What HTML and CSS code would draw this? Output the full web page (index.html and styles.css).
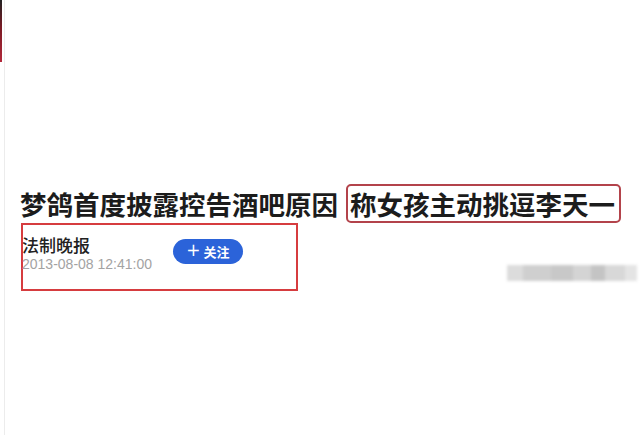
FILE: index.html
```html
<!DOCTYPE html>
<html lang="zh-CN">
<head>
    <meta charset="UTF-8">
    <meta name="viewport" content="width=device-width, initial-scale=1.0">
    <title>梦鸽首度披露控告酒吧原因</title>
    <link rel="stylesheet" href="styles.css">
</head>
<body>
    <div class="screen">
        <div class="edge">
            <div class="edge-mark"></div>
        </div>
        <div class="article">
            <h1 class="title">梦鸽首度披露控告酒吧原因<span class="mark">称女孩主动挑逗李天一</span></h1>
            <div class="meta-row">
                <div class="meta">
                    <div class="source">
                        <p class="name">法制晚报</p>
                        <p class="date">2013-08-08 12:41:00</p>
                    </div>
                    <div class="follow"><span class="plus">+</span>关注</div>
                </div>
                <div class="blur">
                    <span class="b1"></span>
                    <span class="b2"></span>
                    <span class="b3"></span>
                    <span class="b4"></span>
                    <span class="b5"></span>
                    <span class="b6"></span>
                    <span class="b7"></span>
                </div>
            </div>
        </div>
    </div>
</body>
</html>
```

FILE: styles.css
```css
*{
    margin: 0px;
    padding: 0px;
    box-sizing: border-box;
}
body{
    background-color: #fff;
    font-family: "Noto Sans CJK SC", "Noto Sans", sans-serif;
}
.screen{
    width: 640px;
    height: 435px;
    display: flex;
    overflow: hidden;
}
.edge{
    width: 5px;
    border-right: 1px solid #ececec;
}
.edge-mark{
    width: 2px;
    height: 62px;
    background: linear-gradient(#222, #7a1a24 45%, #b3283a);
}
.article{
    flex: 1;
    padding: 184px 3px 0 15px;
}
.title{
    font-size: 26.5px;
    font-weight: 700;
    line-height: 39px;
    color: #1c1c1c;
    white-space: nowrap;
}
.title .mark{
    display: inline-block;
    margin-left: 8px;
    padding: 0 4px 0 2px;
    line-height: 35px;
    border: 2px solid #b3434b;
    border-radius: 5px;
    vertical-align: top;
}
.meta-row{
    display: flex;
    justify-content: space-between;
}
.meta{
    width: 277px;
    height: 68px;
    margin-left: 1px;
    padding: 10px 0 0 0;
    display: flex;
    gap: 21px;
    border: 2px solid #d63c3f;
}
.source{
    margin-left: -1px;
}
.name{
    font-size: 17px;
    font-weight: 500;
    line-height: 20px;
    color: #222;
}
.date{
    font-family: "Liberation Sans", sans-serif;
    font-size: 14px;
    line-height: 18px;
    color: #a3a3a3;
}
.follow{
    width: 70px;
    height: 25px;
    margin-top: 4px;
    display: flex;
    justify-content: center;
    align-items: center;
    gap: 3px;
    border-radius: 13px;
    background-color: #2b63d9;
    color: #fff;
    font-size: 13px;
    font-weight: 700;
}
.follow .plus{
    font-family: "DejaVu Sans", sans-serif;
    font-size: 17px;
    font-weight: 400;
    line-height: 25px;
    margin-top: -2px;
}
.blur{
    width: 130px;
    height: 16px;
    margin-top: 42px;
    display: flex;
    filter: blur(1.5px);
}
.blur span{
    height: 100%;
}
.b1{ width: 16px; background: #dcdcdc; }
.b2{ width: 28px; background: #cfcfcf; }
.b3{ width: 22px; background: #c8c8c8; }
.b4{ width: 18px; background: #d4d4d4; }
.b5{ width: 14px; background: #c4c4c4; }
.b6{ width: 20px; background: #d8d8d8; }
.b7{ width: 12px; background: #e4e4e4; }
```
